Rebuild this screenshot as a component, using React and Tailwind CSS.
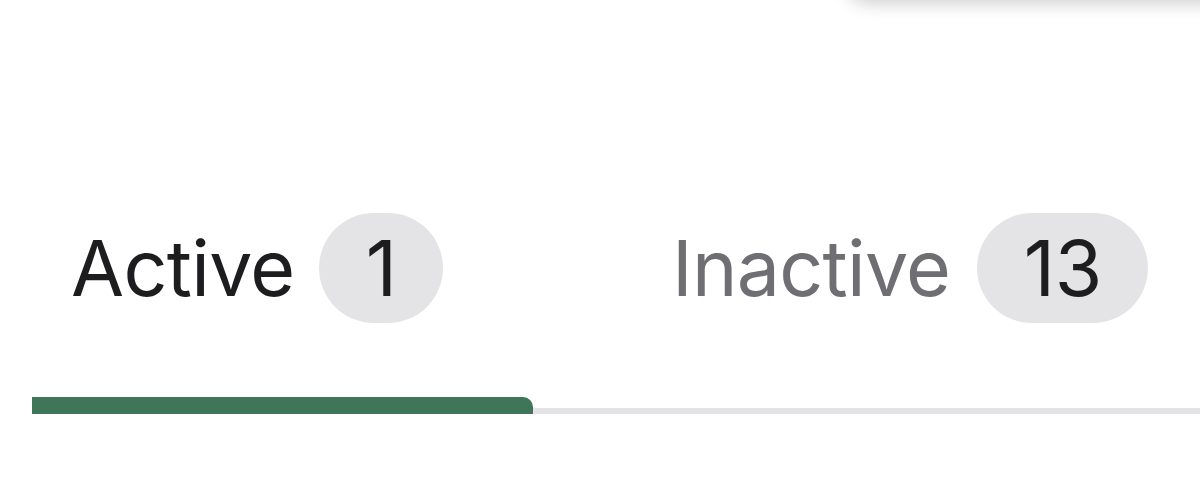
export default function App() {
  return (
    <div
      className="relative w-[1200px] h-[503px] bg-white overflow-hidden"
      style={{ fontFamily: "Inter, 'Liberation Sans', sans-serif" }}
    >
      <div className="absolute top-[-80px] left-[845px] w-[400px] h-[80px] rounded-[24px] bg-white shadow-[0_3px_18px_rgba(0,0,0,0.2)]" />
      <div className="pt-[213px] pl-[32px]">
        <div className="flex">
          <div className="w-[500px] pl-[39px] flex items-center gap-[25px]">
            <span className="text-[77px] leading-none text-[#1d1d1f] tracking-[-0.7px]">Active</span>
            <span className="w-[124px] h-[110px] rounded-full bg-[#e4e4e7] flex items-center justify-center text-[77px] leading-none text-[#1d1d1f]">
              1
            </span>
          </div>
          <div className="pl-[140px] flex items-center gap-[27px]">
            <span className="text-[77px] leading-none text-[#6e6e73] tracking-[-0.7px]">Inactive</span>
            <span className="w-[171px] h-[110px] rounded-full bg-[#e4e4e7] flex items-center justify-center text-[77px] leading-none text-[#1d1d1f] tracking-[-0.5px]">
              13
            </span>
          </div>
        </div>
        <div className="mt-[74px] flex items-end">
          <div className="w-[501px] h-[17px] bg-[#3f765a] rounded-tr-[10px]" />
          <div className="flex-1 h-[6px] bg-[#e2e2e7]" />
        </div>
      </div>
    </div>
  );
}
